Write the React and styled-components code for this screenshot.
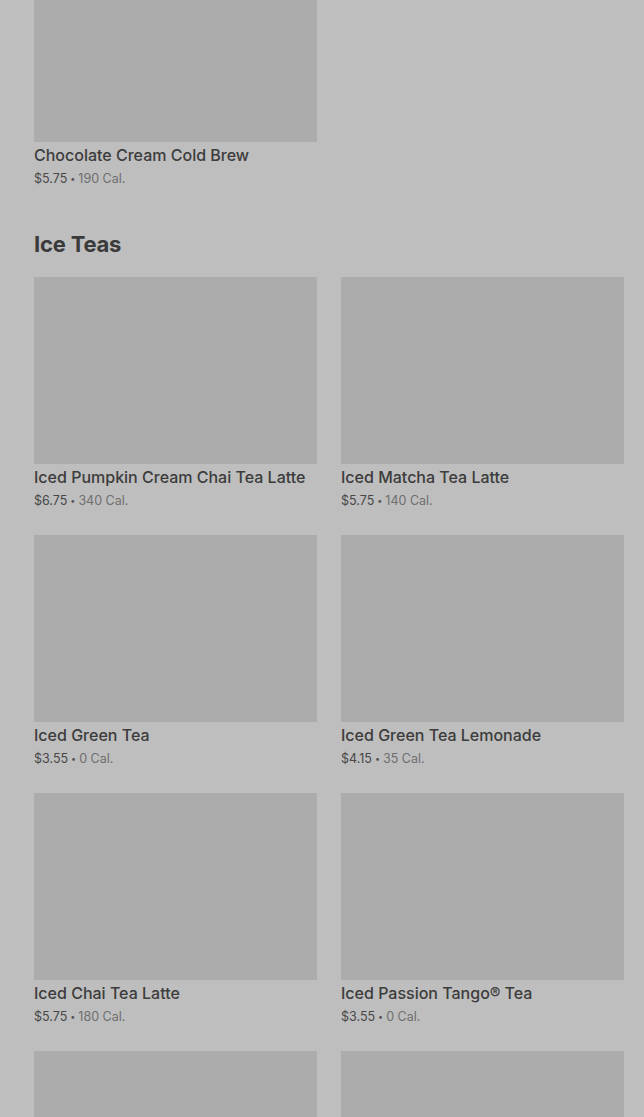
import React from "react"
import styled, { createGlobalStyle } from "styled-components"

const GlobalStyle = createGlobalStyle`
  html, body {
    margin: 0;
    padding: 0;
    background: #bebebe;
    font-family: Inter, "Noto Sans", sans-serif;
    -webkit-font-smoothing: antialiased;
  }
`

const Page = styled.div`
  width: 644px;
  height: 1117px;
  overflow: hidden;
  background: #bebebe;
  padding: 0 20px 0 34px;
  box-sizing: border-box;
`

const Section = styled.section`
  margin-bottom: ${p => p.gap || 0}px;
`

const SectionTitle = styled.h2`
  margin: 0 0 17px;
  font-size: 22px;
  line-height: 32px;
  font-weight: 700;
  color: #3a3a3a;
  letter-spacing: -0.2px;
`

const Grid = styled.div`
  display: grid;
  grid-template-columns: 283px 283px;
  column-gap: 24px;
  row-gap: 24px;
`

const Card = styled.div`
  display: flex;
  flex-direction: column;
`

const Thumb = styled.div`
  height: ${p => p.h || 187}px;
  background: #acacac;
  margin-bottom: 3px;
`

const Name = styled.div`
  font-size: 16px;
  line-height: 20px;
  font-weight: 500;
  color: #3c3c3c;
`

const Meta = styled.div`
  margin-top: 4px;
  font-size: 12.5px;
  line-height: 20px;
  color: #6e6e6e;
`

const Price = styled.span`
  color: #474747;
`

const Dot = styled.span`
  margin: 0 3px;
  font-size: 9px;
  vertical-align: 1px;
  color: #555;
`

const teas = [
  { name: "Iced Pumpkin Cream Chai Tea Latte", price: "$6.75", cal: "340 Cal." },
  { name: "Iced Matcha Tea Latte", price: "$5.75", cal: "140 Cal." },
  { name: "Iced Green Tea", price: "$3.55", cal: "0 Cal." },
  { name: "Iced Green Tea Lemonade", price: "$4.15", cal: "35 Cal." },
  { name: "Iced Chai Tea Latte", price: "$5.75", cal: "180 Cal." },
  { name: "Iced Passion Tango® Tea", price: "$3.55", cal: "0 Cal." },
  { name: "", price: "", cal: "" },
  { name: "", price: "", cal: "" },
]

const Item = ({ item, h }) => (
  <Card>
    <Thumb h={h} />
    {item.name && <Name>{item.name}</Name>}
    {item.price && (
      <Meta>
        <Price>{item.price}</Price>
        <Dot>•</Dot>
        {item.cal}
      </Meta>
    )}
  </Card>
)

export default function App() {
  return (
    <>
      <GlobalStyle />
      <Page>
        <Section gap={39}>
          <Grid>
            <Item h={142} item={{ name: "Chocolate Cream Cold Brew", price: "$5.75", cal: "190 Cal." }} />
          </Grid>
        </Section>
        <Section>
          <SectionTitle>Ice Teas</SectionTitle>
          <Grid>
            {teas.map((t, i) => (
              <Item key={i} item={t} />
            ))}
          </Grid>
        </Section>
      </Page>
    </>
  )
}
